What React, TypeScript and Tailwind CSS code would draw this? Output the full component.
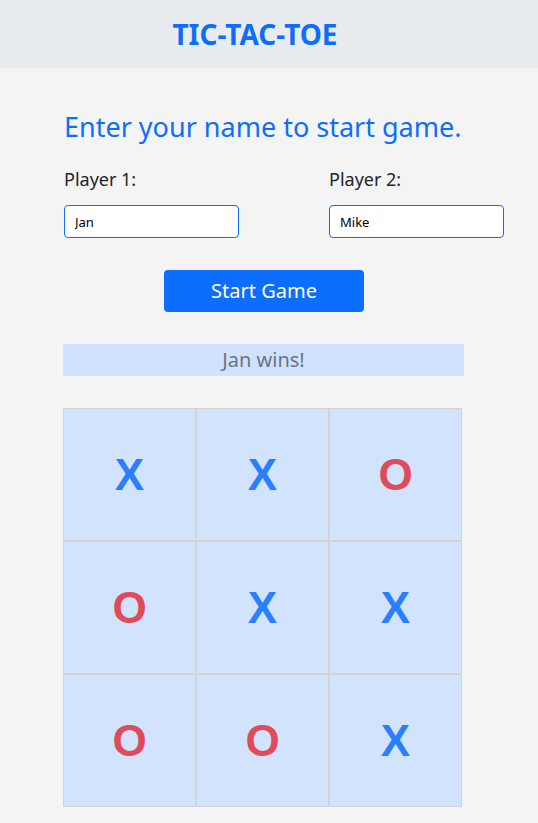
import React from 'react';

const board = ['X', 'X', 'O', 'O', 'X', 'X', 'O', 'O', 'X'];

function Cell({ value }: { value: string }) {
  return (
    <div className="flex h-[133px] w-[133px] items-center justify-center border border-[#d3d3d3] bg-[#d1e3fd]">
      <span
        className={
          'font-["Liberation_Sans",Arial,sans-serif] text-[44px] font-bold leading-none ' +
          (value === 'X' ? 'text-[#2a7fff]' : 'text-[#e04a5a]')
        }
      >
        {value}
      </span>
    </div>
  );
}

export default function App() {
  return (
    <div className='min-h-[823px] bg-[#f4f4f4] font-["Noto_Sans",sans-serif]'>
      {/* Header */}
      <header className="flex h-[68px] items-center justify-center bg-[#e9ecef] pr-[28px]">
        <h1 className="text-[28px] font-bold text-[#0d6efd]">TIC-TAC-TOE</h1>
      </header>

      <main className="px-[64px] pt-[38px]">
        <h2 className="text-[27px] leading-[42px] text-[#0d6efd]">Enter your name to start game.</h2>

        {/* Player inputs */}
        <div className="mt-[18px] grid grid-cols-[265px_1fr]">
          <div>
            <label className="block text-[18px] leading-[27px] text-[#212529]">Player 1:</label>
            <input
              defaultValue="Jan"
              className="mt-[12px] h-[33px] w-[175px] rounded-[4px] border border-[#0d6efd] bg-white px-[10px] text-[13px] text-black outline-none"
            />
          </div>
          <div>
            <label className="block text-[18px] leading-[27px] text-[#212529]">Player 2:</label>
            <input
              defaultValue="Mike"
              className="mt-[12px] h-[33px] w-[175px] rounded-[4px] border border-[#0d6efd] bg-white px-[10px] text-[13px] text-black outline-none"
            />
          </div>
        </div>

        <div className="w-[400px]">
          <div className="mt-[32px] flex justify-center">
            <button className="h-[42px] w-[200px] rounded-[4px] bg-[#0d6efd] text-[20px] text-white">
              Start Game
            </button>
          </div>

          {/* Status */}
          <div className="mt-[32px] ml-[-1px] flex h-[32px] items-center justify-center bg-[#cfe2ff] text-[20px] text-[#6c757d]">
            Jan wins!
          </div>

          {/* Board */}
          <div className="mt-[32px] ml-[-1px] grid w-[399px] grid-cols-3">
            {board.map((v, i) => (
              <Cell key={i} value={v} />
            ))}
          </div>
        </div>
      </main>
    </div>
  );
}
